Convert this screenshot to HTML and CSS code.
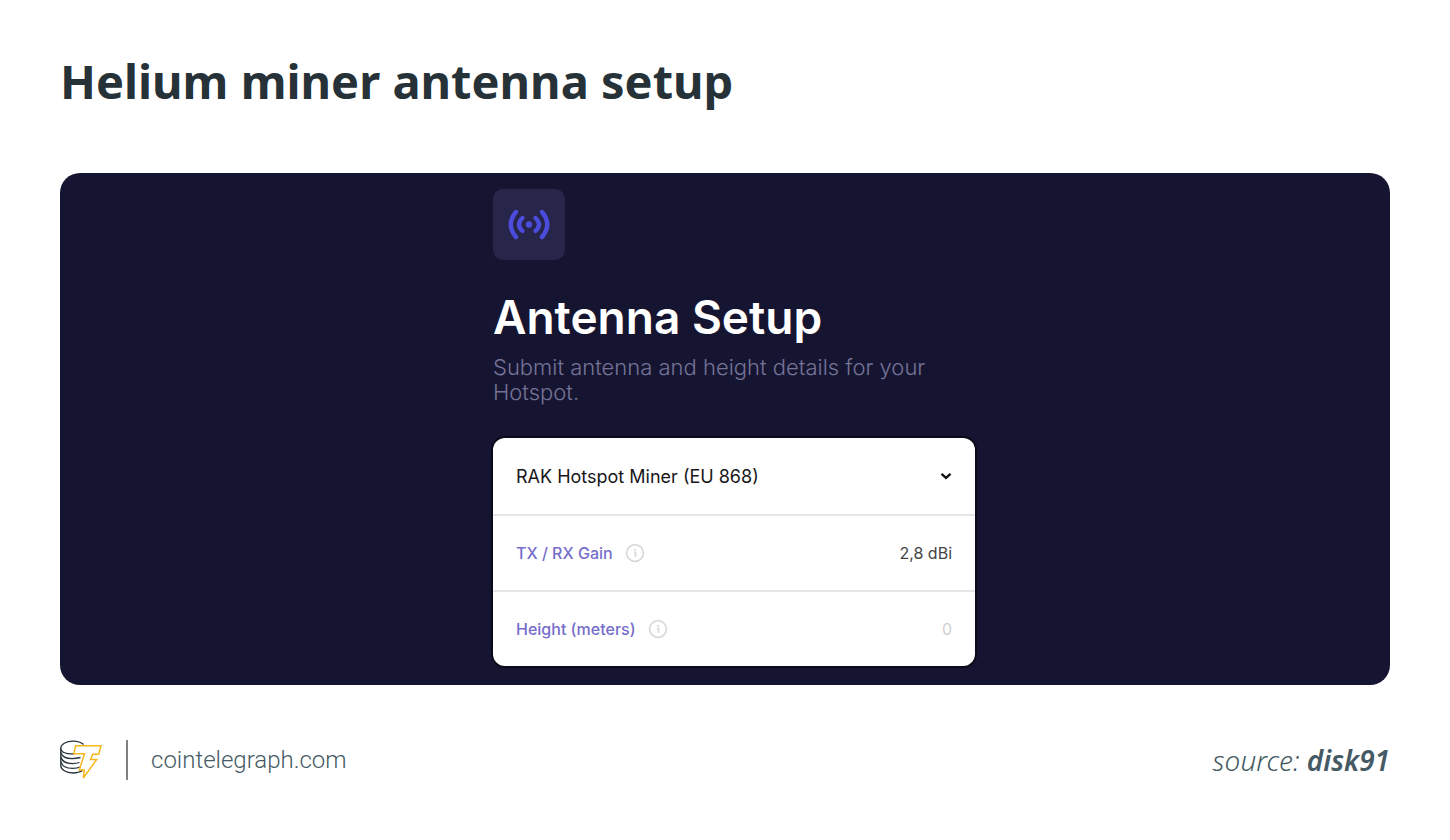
FILE: index.html
```html
<!DOCTYPE html>
<html lang="en">
<head>
<meta charset="utf-8">
<title>Helium miner antenna setup</title>
<link rel="stylesheet" href="styles.css">
</head>
<body>
<main class="page">
  <h1 class="page-title">Helium miner antenna setup</h1>
  <section class="panel">
    <form class="setup">
      <div class="tile">
        <svg class="tile-icon" viewBox="0 0 42 32" fill="none" stroke="#4b4bdc" stroke-width="4.400" stroke-linecap="round" aria-hidden="true">
          <circle cx="21" cy="15.500" r="3.200" fill="#4b4bdc" stroke="none"/>
          <path d="M14.500 9Q7.500 15.500 14.500 22M27.500 9Q34.500 15.500 27.500 22"/>
          <path d="M8 3Q-2.500 15.500 8 28M34 3Q44.500 15.500 34 28"/>
        </svg>
      </div>
      <h2 class="setup-title">Antenna Setup</h2>
      <p class="setup-text">Submit antenna and height details for your Hotspot.</p>
      <div class="card">
        <div class="row">
          <select class="select" aria-label="Antenna">
            <option>RAK Hotspot Miner (EU 868)</option>
          </select>
          <svg class="chevron" viewBox="0 0 12 8" fill="none" stroke="#111" stroke-width="2.400" aria-hidden="true"><path d="M1.500 1.800L6 5.800L10.500 1.800"/></svg>
        </div>
        <div class="row">
          <label class="label" for="gain">TX / RX Gain</label>
          <svg class="info" viewBox="0 0 20 20" fill="none" stroke="#dad8dd" stroke-width="1.700" aria-hidden="true"><circle cx="10" cy="10" r="8.400"/><path d="M10 6v2M9 9.500h1.500V14"/></svg>
          <input class="value" id="gain" type="text" value="2,8 dBi">
        </div>
        <div class="row">
          <label class="label" for="height">Height (meters)</label>
          <svg class="info" viewBox="0 0 20 20" fill="none" stroke="#dad8dd" stroke-width="1.700" aria-hidden="true"><circle cx="10" cy="10" r="8.400"/><path d="M10 6v2M9 9.500h1.500V14"/></svg>
          <input class="value" id="height" type="text" placeholder="0">
        </div>
      </div>
    </form>
  </section>
  <footer class="footer">
    <svg class="logo" viewBox="0 0 42 40" fill="none" stroke-width="1.300" role="img" aria-label="Cointelegraph">
      <g stroke="#26343a">
        <path d="M23.500 4.600C21 2.300 17.500 1.200 13 1.200C6 1.200 .8 4.200 .8 8.200C.8 12.300 6 14.400 14.500 13.800"/>
        <path d="M.8 8.200V25.500C.8 29.500 6 33 13 33C17 33 20.500 32 23 30.300"/>
        <path d="M.8 12.500C2 16.500 6.500 18.600 12 18.600C14.500 18.600 16.500 18.400 20.500 17.500"/>
        <path d="M.8 17C2 21.500 6.500 23.600 12.500 23.600C15 23.600 17 23.300 19.500 22.500"/>
        <path d="M.8 21.700C2 26.500 6.500 28.400 12.500 28.400C16 28.400 18 28.200 20 27"/>
      </g>
      <path stroke="#f5b81f" stroke-width="1.500" d="M15.700 5.700H41L38.700 14.200H32.700L30.500 19.400H36.700L23.300 38L24.300 29.900H19.300L24.500 13.700H13.700Z"/>
    </svg>
    <span class="divider"></span>
    <a class="site" href="#">cointelegraph.com</a>
    <p class="source">source: <strong class="source-name">disk91</strong></p>
  </footer>
</main>
</body>
</html>
```
FILE: styles.css
```css
* { box-sizing: border-box; }
body { margin: 0; background: #fff; }
.page { display: flex; flex-direction: column; padding: 47px 60px; }
.page-title {
  margin: 0 0 58px;
  font: 700 47px/68px "Noto Sans", sans-serif;
  color: #263238;
}
.panel {
  display: grid;
  grid-template-columns: 433fr minmax(0, 482px) 415fr;
  padding: 16px 0 19px;
  border-radius: 20px;
  background: #161531;
  font-family: Inter, sans-serif;
}
.setup { grid-column: 2; }
.tile {
  display: grid;
  place-items: center;
  width: 72px;
  height: 71px;
  border-radius: 10px;
  background: #27264a;
}
.tile-icon { width: 42px; height: 32px; }
.setup-title {
  margin: 29px 0 10px;
  font-weight: 600;
  font-size: 46px;
  line-height: 56px;
  color: #fff;
}
.setup-text {
  max-width: 450px;
  margin: 0 0 33px;
  font-weight: 300;
  font-size: 22px;
  line-height: 25px;
  color: #757397;
}
.card {
  border-radius: 12px;
  background: #fff;
  box-shadow: 0 0 0 2px #0b0a19;
}
.row {
  display: flex;
  align-items: center;
  height: 76px;
  padding: 0 23px;
  font-size: 16px;
}
.row + .row { border-top: 2px solid #e6e5e9; }
.select, .value {
  flex: 1;
  min-width: 0;
  padding: 0;
  border: 0;
  background: transparent;
  font: inherit;
}
.select { appearance: none; font-size: 18px; color: #171719; }
.chevron { width: 12px; height: 8px; }
.label { font-weight: 500; color: #766dcc; }
.info { width: 20px; height: 20px; margin-left: 12px; }
.value { text-align: right; color: #444; }
.value::placeholder { color: #d0d0d3; }
.footer {
  display: flex;
  align-items: center;
  margin-top: 55px;
  color: #455a64;
}
.logo { width: 42px; height: 40px; }
.divider { width: 2px; height: 40px; margin: 0 23px 0 24px; background: #808080; }
.site {
  font: 300 24px/38px Roboto, sans-serif;
  color: inherit;
  text-decoration: none;
}
.source {
  margin: 0 0 0 auto;
  font: italic 300 28px/40px "Noto Sans", sans-serif;
}
.source-name { font-weight: 600; }
```
